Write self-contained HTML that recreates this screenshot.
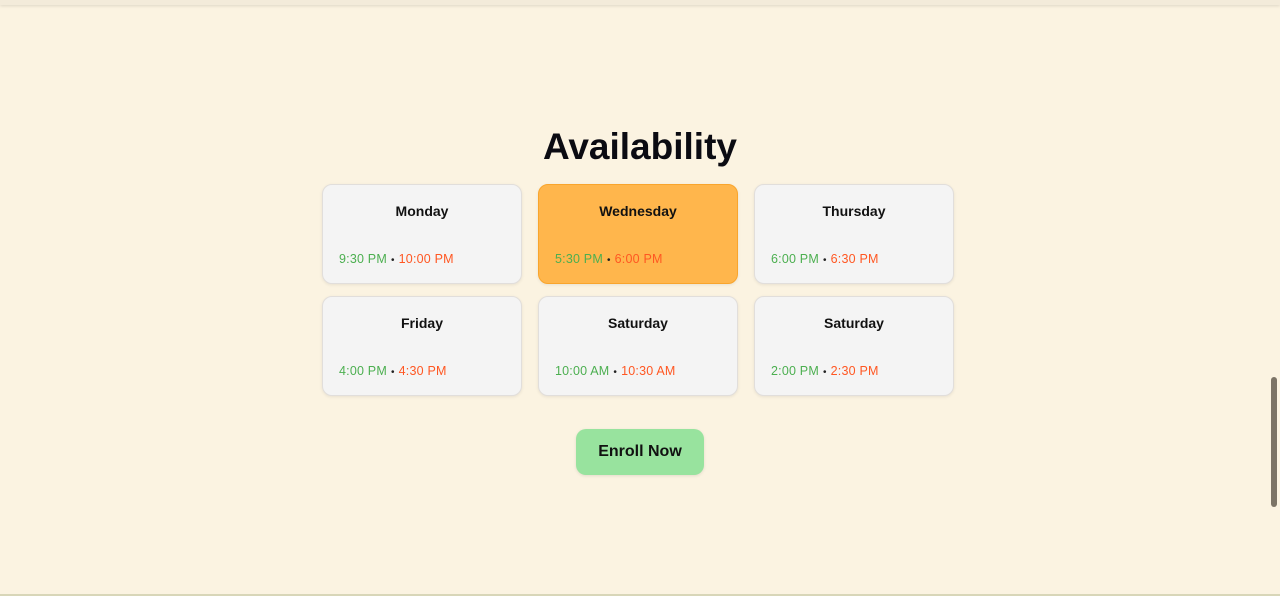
<!DOCTYPE html>
<html><head><style>
html,body{margin:0;padding:0;width:1280px;height:596px;overflow:hidden;background:#fbf3e1;font-family:"Liberation Sans",Arial,sans-serif;}
.top{position:absolute;left:0;top:0;width:1280px;height:5px;background:#f3ebda;box-shadow:0 1px 3px rgba(0,0,0,.12);}
h1{position:absolute;left:0;width:1280px;top:125px;margin:0;text-align:center;font-size:37px;font-weight:bold;color:#0b0b12;line-height:44px;}
.card{position:absolute;width:198px;height:98px;border:1px solid #e1dedb;border-radius:10px;background:#f4f4f4;box-shadow:0 1px 3px rgba(0,0,0,.08);}
.card.sel{background:#ffb64c;border-color:#f9a52c;}
.card .d{position:absolute;top:18px;left:0;width:100%;text-align:center;font-size:14px;font-weight:bold;color:#111;}
.card .t{position:absolute;top:67px;left:16px;font-size:12.5px;letter-spacing:0.2px;}
.g{color:#4caf50}.r{color:#ff5722}.dot{color:#222;margin:0 4px;font-size:10px}
.btn{position:absolute;left:576px;top:429px;width:128px;height:46px;border-radius:10px;background:#98e39e;color:#111;font-weight:bold;font-size:16px;text-align:center;line-height:46px;box-shadow:0 1px 3px rgba(0,0,0,.1);}
.sb{position:absolute;left:1271px;top:377px;width:6px;height:130px;border-radius:3px;background:#7c7466;}
.bot{position:absolute;left:0;top:594px;width:1280px;height:2px;background:#d8d6b8;}
</style></head><body>
<div class="top"></div>
<h1>Availability</h1>
<div class="card" style="left:322px;top:184px"><div class="d">Monday</div><div class="t"><span class="g">9:30 PM</span><span class="dot">•</span><span class="r">10:00 PM</span></div></div>
<div class="card sel" style="left:538px;top:184px"><div class="d">Wednesday</div><div class="t"><span class="g">5:30 PM</span><span class="dot">•</span><span class="r">6:00 PM</span></div></div>
<div class="card" style="left:754px;top:184px"><div class="d">Thursday</div><div class="t"><span class="g">6:00 PM</span><span class="dot">•</span><span class="r">6:30 PM</span></div></div>
<div class="card" style="left:322px;top:296px"><div class="d">Friday</div><div class="t"><span class="g">4:00 PM</span><span class="dot">•</span><span class="r">4:30 PM</span></div></div>
<div class="card" style="left:538px;top:296px"><div class="d">Saturday</div><div class="t"><span class="g">10:00 AM</span><span class="dot">•</span><span class="r">10:30 AM</span></div></div>
<div class="card" style="left:754px;top:296px"><div class="d">Saturday</div><div class="t"><span class="g">2:00 PM</span><span class="dot">•</span><span class="r">2:30 PM</span></div></div>
<div class="btn">Enroll Now</div>
<div class="sb"></div>
<div class="bot"></div>
</body></html>
